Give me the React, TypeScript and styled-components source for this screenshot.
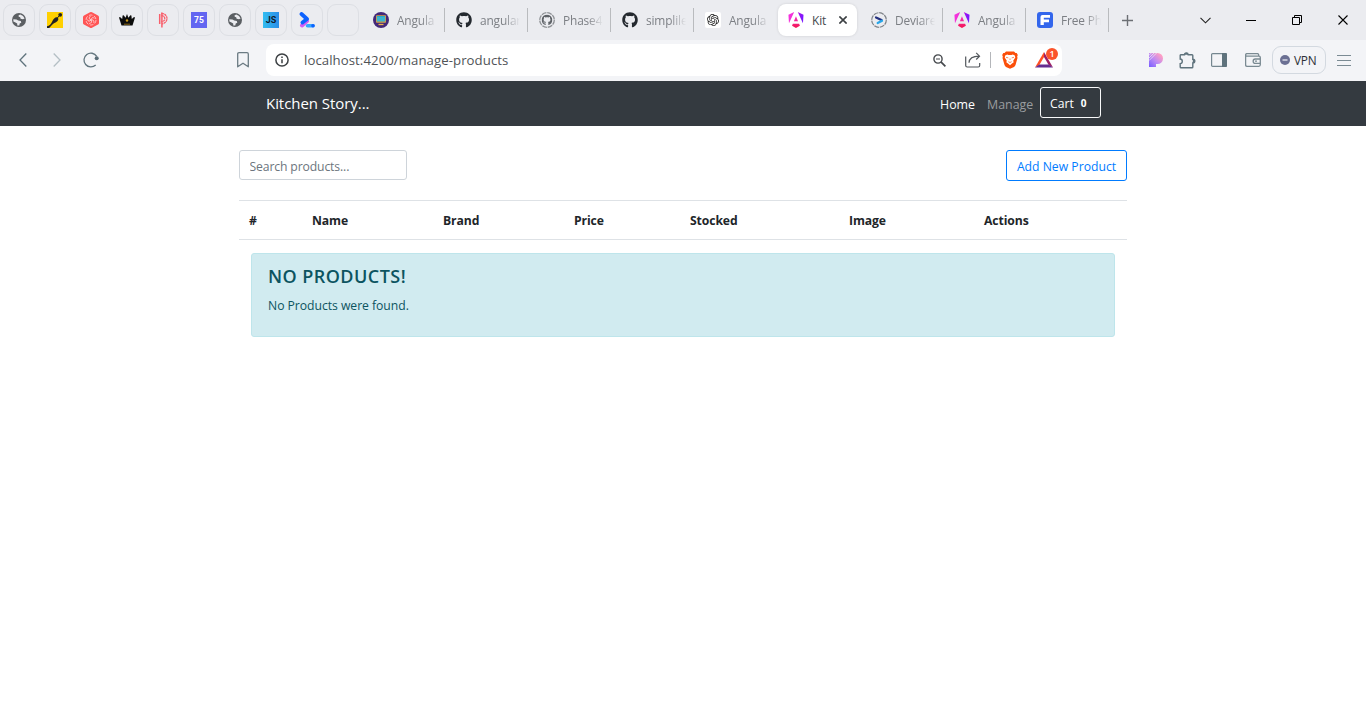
import React from "react";
import styled, { createGlobalStyle, css } from "styled-components";
import { FaGithub } from "react-icons/fa";
import { SiOpenai } from "react-icons/si";

const GlobalStyle = createGlobalStyle`
  *, *::before, *::after { box-sizing: border-box; }
  html, body { margin: 0; padding: 0; background: #fff; overflow: hidden; }
  body { font-family: "Open Sans", "Noto Sans", sans-serif; font-size: 12.2px; color: #212529; }
  svg { display: block; flex: none; }
`;

const Window = styled.div`
  width: 1366px;
  height: 728px;
  display: flex;
  flex-direction: column;
  background: #fff;
`;

/* ---------- browser tabs ---------- */

const TabStrip = styled.div`
  height: 40px;
  flex: none;
  display: flex;
  align-items: center;
  background: #ebecf0;
  padding-left: 3px;
`;

const PinnedTabs = styled.div`
  display: flex;
  gap: 4px;
  margin-right: 3px;
`;

const PinnedTab = styled.div`
  width: 32px;
  height: 32px;
  border: 1px solid #dddfe4;
  border-radius: 9px;
  display: flex;
  align-items: center;
  justify-content: center;
`;

const Tab = styled.div<{ $active?: boolean; $divider?: boolean }>`
  width: 83px;
  height: 24px;
  display: flex;
  align-items: center;
  padding-left: 11px;
  border-right: 1px solid ${(p) => (p.$divider ? "#b9bbbe" : "transparent")};
  color: ${(p) => (p.$active ? "#45484c" : "#7c7f84")};
  ${(p) =>
    p.$active &&
    css`
      width: 79px;
      height: 32px;
      margin: 0 3px 0 1px;
      padding-left: 10px;
      border: 0;
      border-radius: 8px;
      background: #fff;
      box-shadow: 0 0 3px rgba(0, 0, 0, 0.12);
    `}
`;

const TabTitle = styled.span<{ $solid?: boolean }>`
  width: ${(p) => (p.$solid ? 16 : 40)}px;
  margin-left: 8px;
  white-space: nowrap;
  font-size: 11.9px;
  line-height: 18px;
  letter-spacing: -0.15px;
  ${(p) => !p.$solid && "mask-image: linear-gradient(90deg, #000 60%, rgba(0, 0, 0, 0.15) 95%, transparent 100%);"}
`;

const TabClose = styled.span`
  margin-left: 11px;
`;

const NewTab = styled.div`
  width: 36px;
  display: flex;
  justify-content: center;
`;

const WindowControls = styled.div`
  display: flex;
  margin-left: auto;
`;

const WindowControl = styled.div`
  width: 46px;
  height: 40px;
  display: flex;
  align-items: center;
  justify-content: center;
`;

/* ---------- browser toolbar ---------- */

const Toolbar = styled.div`
  height: 41px;
  flex: none;
  display: flex;
  align-items: center;
  padding: 0 4px 1px 8px;
  background: #f3f4f7;
`;

const Slot = styled.div<{ $w: number; $gap?: number }>`
  position: relative;
  width: ${(p) => p.$w}px;
  height: 32px;
  flex: none;
  display: flex;
  align-items: center;
  justify-content: center;
  margin-right: ${(p) => p.$gap ?? 0}px;
`;

const AddressBar = styled.div`
  width: 796px;
  height: 32px;
  display: flex;
  align-items: center;
  background: #fff;
  border-radius: 8px;
  margin-right: 77px;
`;

const Url = styled.div`
  flex: 1;
  padding-left: 6px;
  font-size: 13.2px;
  line-height: 20px;
  color: #505357;
  letter-spacing: 0.07px;
`;

const AddressDivider = styled.div`
  width: 1px;
  height: 16px;
  background: #b4b6ba;
`;

const Badge = styled.span`
  position: absolute;
  left: 17px;
  top: 4px;
  width: 12px;
  height: 12px;
  border-radius: 6px;
  background: #fb542b;
  color: #fff;
  font-size: 9px;
  font-weight: 600;
  line-height: 12px;
  text-align: center;
`;

const VpnButton = styled.div`
  width: 54px;
  height: 28px;
  display: flex;
  align-items: center;
  gap: 4px;
  padding-left: 7px;
  border: 1px solid #d3d9e0;
  border-radius: 9px;
  font-size: 11.8px;
  letter-spacing: -0.2px;
  color: #2c2f36;
`;

/* ---------- application ---------- */

const Navbar = styled.nav`
  height: 45px;
  flex: none;
  display: flex;
  align-items: center;
  justify-content: space-between;
  padding: 0 265px 0 266px;
  background: #343a40;
`;

const Brand = styled.span`
  margin-bottom: 2px;
  color: #fff;
  font-size: 15px;
  line-height: 24px;
  letter-spacing: -0.05px;
`;

const NavLinks = styled.div`
  display: flex;
  align-items: center;
  height: 31px;
  margin-bottom: 2px;
`;

const NavLink = styled.span<{ $active?: boolean; $w: number }>`
  width: ${(p) => p.$w}px;
  padding-top: 3px;
  color: ${(p) => (p.$active ? "#fff" : "#999c9f")};
  font-size: 12.4px;
`;

const CartButton = styled.div`
  width: 61px;
  height: 31px;
  display: flex;
  align-items: center;
  padding: 1px 0 0 9px;
  border: 1px solid #f8f9fa;
  border-radius: 3px;
  color: #fff;
  font-size: 12.2px;
`;

const CartCount = styled.b`
  margin-left: 7px;
  font-size: 10px;
`;

const Container = styled.main`
  width: 888px;
  margin: 24px auto 0;
`;

const Actions = styled.div`
  display: flex;
  justify-content: space-between;
  margin-bottom: 19px;
`;

const SearchInput = styled.input`
  width: 168px;
  height: 30px;
  padding: 2px 9px 0 9.5px;
  border: 1px solid #ced4da;
  border-radius: 3px;
  font: inherit;
  letter-spacing: -0.13px;
  outline: 0;
  &::placeholder { color: #6c757d; opacity: 1; }
`;

const AddButton = styled.button`
  width: 121px;
  height: 31px;
  padding: 2px 0 0;
  border: 1px solid #007bff;
  border-radius: 3px;
  background: #fff;
  color: #007bff;
  font: inherit;
  white-space: nowrap;
`;

const Table = styled.table`
  width: 888px;
  table-layout: fixed;
  border-collapse: separate;
  border-spacing: 0;
`;

const HeadCell = styled.th<{ $w: number }>`
  width: ${(p) => p.$w}px;
  height: 40px;
  padding: 0 0 0 10px;
  border-top: 1px solid #dee2e6;
  border-bottom: 1px solid #dee2e6;
  text-align: left;
  font-weight: 700;
  font-size: 12.2px;
  letter-spacing: -0.1px;
`;

const Alert = styled.section`
  height: 84px;
  margin: 13px 12px 0;
  padding: 9px 16px;
  border: 1px solid #bee5eb;
  border-radius: 3px;
  background: #d1ebf0;
  color: #0c5460;
`;

const AlertTitle = styled.h4`
  margin: 0 0 7px;
  font-size: 18px;
  line-height: 26px;
  font-weight: 600;
  letter-spacing: 0.45px;
`;

const AlertText = styled.p`
  margin: 0;
  line-height: 19px;
  letter-spacing: -0.04px;
`;

/* ---------- icons ---------- */

const AngularIcon = ({ id }: { id: string }) => (
  <svg width="16" height="16" viewBox="0 0 223 236">
    <defs>
      <linearGradient id={`${id}a`} x1="0" y1="0" x2="1" y2="0.3">
        <stop offset="0" stopColor="#f637e3" />
        <stop offset="0.5" stopColor="#f02ad0" />
        <stop offset="0.7" stopColor="#a013f0" />
        <stop offset="1" stopColor="#7a17ff" />
      </linearGradient>
      <linearGradient id={`${id}b`} x1="0" y1="0" x2="0" y2="1">
        <stop offset="0" stopColor="#f030c8" />
        <stop offset="1" stopColor="#f5144f" />
      </linearGradient>
    </defs>
    <path fill={`url(#${id}a)`} d="m222.077 39.192-8.019 125.923L137.387 0l84.69 39.192ZM7.937 165.115 0 39.192 84.69 0 7.937 165.115Z" />
    <path fill={`url(#${id}b)`} d="m168.972 202.017-57.933 33.056-57.934-33.056 11.783-28.556h92.301l11.783 28.556ZM111.039 62.675l30.357 73.803H80.681l30.358-73.803Z" />
  </svg>
);

const Globe = () => (
  <svg width="14" height="14" viewBox="0 0 14 14">
    <circle cx="7" cy="7" r="7" fill="#5b5f63" />
    <path d="M8.300 1.400 6.600 2.300 6.700 3.700 8.200 4.200 8.600 5.800 11 6.300 12.600 5.600A6 6 0 0 0 8.300 1.400ZM1.300 6.200 4.500 6.400 6.200 7.600 8.800 8 9.300 9.700 7.700 10.600 7.300 12.600 5.300 12.600 5.200 10.400 3.500 9.600 1.400 8.500Z" fill="#ebecf0" />
  </svg>
);

const DarkSpoon = () => (
  <svg width="16" height="16" viewBox="0 0 16 16">
    <rect width="16" height="16" fill="#ffd000" />
    <path d="M0 16V14.200C2.500 14 4 12 5.200 9.500 6.500 6.500 9 4.500 10.500 5.600S11.500 9 9 10.300C6 11.500 4 14 2.200 16Z" fill="#222" />
    <path d="m9 7.500 3.500-4" stroke="#222" strokeWidth="1" />
    <circle cx="13.200" cy="2.800" r="1.900" fill="#222" />
  </svg>
);

const HexSwirl = () => (
  <svg width="16" height="16" viewBox="0 0 16 16">
    <path d="M7 .3q1-.5 2 0l6 3.100q1 .6 1 1.600v6q0 1-1 1.600l-6 3.100q-1 .5-2 0l-6-3.100q-1-.6-1-1.600V5q0-1 1-1.600Z" fill="#ff5555" />
    <g fill="none" stroke="#ffd9d9" strokeWidth="0.8">
      <circle cx="8" cy="8" r="5" strokeDasharray="3.700 1.500" />
      {[0, 72, 144, 216, 288].map((a) => (
        <path key={a} d="M8 8C8 6 9.500 5 11.500 6.200" transform={`rotate(${a} 8 8)`} />
      ))}
    </g>
  </svg>
);

const Crown = () => (
  <svg width="16" height="12" viewBox="0 0 16 12">
    <path d="M2.500 11.500 0 3.500l1-.5 2.200 2 .4-3.500 1-.3 2 2.500L8 0l1.400 3.700 2-2.500 1 .3.400 3.500L15 3l1 .5-2.500 8Z" fill="#0c0c0c" />
    <path d="M5 10.200h6" stroke="#a97d16" strokeWidth="0.800" />
    <circle cx="8" cy="6.500" r="1.200" fill="#c8981d" />
  </svg>
);

const PinkP = () => (
  <svg width="10" height="16" viewBox="0 0 10 16" fill="none" stroke="#f8606c">
    <path d="M1.700 2v10M3.900.500v15" strokeWidth="1.500" />
    <path d="M3.300 1.300C7 1.500 9 4 9 6.500s-2 5-5 5.300M3.300 3.500C6 4 6.800 5 6.800 6.700S5.500 9.500 3.300 9.700" strokeWidth="1.300" strokeDasharray="2.500 .5" />
  </svg>
);

const LetterTile = styled.span<{ $bg: string; $fg: string; $size: number }>`
  width: 16px;
  height: 16px;
  background: ${(p) => p.$bg};
  color: ${(p) => p.$fg};
  font: 700 ${(p) => p.$size}px/16px Roboto, sans-serif;
  text-align: center;
`;

const PromptLogo = () => (
  <svg width="16" height="16" viewBox="0 0 16 16" fill="none" strokeLinecap="round">
    <path d="M3 13.500 8 9" stroke="#d65cf5" strokeWidth="4" />
    <path d="M2.500 2 8 7 3.500 10.500" stroke="#0d62fe" strokeWidth="3.800" strokeLinejoin="round" />
    <path d="M8.500 13.700h5.500" stroke="#38a5ff" strokeWidth="3.600" />
    <circle cx="14" cy="13.700" r="1.800" fill="#0d62fe" />
  </svg>
);

const MonitorLogo = () => (
  <svg width="16" height="16" viewBox="0 0 16 16">
    <circle cx="8" cy="8" r="8" fill="#43297a" />
    <rect x="3" y="3.200" width="10" height="7.600" rx="0.800" fill="#d9a04a" />
    <rect x="3.800" y="4" width="8.400" height="5.500" fill="#28a8c8" />
    <path d="M4 6h8M4 8h8" stroke="#55c8df" strokeWidth="0.800" />
    <path d="M5.500 12.500h5" stroke="#f0b44c" strokeWidth="1.300" />
  </svg>
);

const RingGithub = () => (
  <svg width="16" height="16" viewBox="0 0 16 16">
    <circle cx="8" cy="8" r="7.300" fill="none" stroke="#8e9195" strokeWidth="1.300" strokeDasharray="4.900 .83" />
    <g transform="translate(2.500 2.500)">
      <FaGithub size={11} color="#5f6368" />
    </g>
  </svg>
);

const OpenAiTile = () => (
  <svg width="16" height="16" viewBox="0 0 16 16">
    <rect width="16" height="16" rx="2" fill="#fff" />
    <g transform="translate(2 2)">
      <SiOpenai size={12} color="#222" />
    </g>
  </svg>
);

const DeviareLogo = () => (
  <svg width="16" height="16" viewBox="0 0 16 16" fill="none">
    <circle cx="8" cy="8" r="7.300" stroke="#7e8287" strokeWidth="1.200" strokeDasharray="4.900 .83" />
    <path d="m5 5.500 5.500 2.600" stroke="#24307f" strokeWidth="2.200" strokeLinecap="round" />
    <path d="m11 8.800-4.300 2.200" stroke="#28a6e8" strokeWidth="2.300" strokeLinecap="round" />
  </svg>
);

const FreeLogo = () => (
  <svg width="16" height="16" viewBox="0 0 16 16">
    <rect width="16" height="16" rx="3" fill="#3366ec" />
    <path d="M3.500 13V5q0-2 2-2H13v2.700H6.800V7.500H12v2.700H6.800V13Z" fill="#fff" />
  </svg>
);

const CrossIcon = ({ size, color, weight }: { size: number; color: string; weight: number }) => (
  <svg width={size} height={size} viewBox="0 0 10 10">
    <path d="m.5.5 9 9m0-9-9 9" stroke={color} strokeWidth={weight} fill="none" />
  </svg>
);

const Chevron = ({ flip, color }: { flip?: boolean; color: string }) => (
  <svg width="8" height="14" viewBox="0 0 8 14">
    <path d={flip ? "M.700.500 7 7 .700 13.500" : "M7.300.500 1 7l6.300 6.500"} stroke={color} strokeWidth="1.300" fill="none" />
  </svg>
);

const Reload = () => (
  <svg width="16" height="16" viewBox="0 0 16 16">
    <path d="M12.700 13A6.900 6.900 0 1 1 13.700 4.300" stroke="#62757e" strokeWidth="1.300" fill="none" />
    <circle cx="13.700" cy="6.300" r="2" fill="#5b6e78" />
  </svg>
);

const Bookmark = () => (
  <svg width="12" height="16" viewBox="0 0 12 16">
    <path d="M.700 14.800V2Q.700.700 2 .700h8q1.300 0 1.300 1.300v12.800L6 11.200Z" stroke="#6b7b83" strokeWidth="1.300" fill="none" strokeLinejoin="round" />
  </svg>
);

const Info = () => (
  <svg width="14" height="14" viewBox="0 0 14 14">
    <circle cx="7" cy="7" r="6.100" stroke="#3c4043" strokeWidth="1.500" fill="none" />
    <path d="M7 6.200v4M7 3.600v1.500" stroke="#3c4043" strokeWidth="1.500" />
  </svg>
);

const ZoomOut = () => (
  <svg width="13" height="13" viewBox="0 0 13 13" fill="none" stroke="#45494d">
    <circle cx="5" cy="5" r="4.100" strokeWidth="1.400" />
    <path d="M3 5h4" strokeWidth="1" />
    <path d="m7.900 7.900 4.500 4.500" strokeWidth="1.700" />
  </svg>
);

const Share = () => (
  <svg width="16" height="16" viewBox="0 0 16 16" fill="none" stroke="#52575c" strokeWidth="1.200">
    <path d="M.700 4.500v9q0 1.500 1.500 1.500h11q1.500 0 1.500-1.500V11" />
    <path d="M4 10.800C4.200 6.500 7 4.200 14.300 4.200M11.200.900l3.300 3.300-3.300 3.300" />
  </svg>
);

const BraveLion = () => (
  <svg width="16" height="18" viewBox="0 0 16 18">
    <path d="M4 .5h8l1.500 1.500 1.200-.1 1.100 2-.6 1.500.3 1.500-2 7.200q-.4 1.100-1.500 1.900L8 17.800 4 16q-1.100-.8-1.500-1.900L.500 6.900l.3-1.500-.6-1.500 1.100-2 1.200.1Z" fill="#fb4f0a" />
    <path d="m3.200 4.500 2-1.100 1.300.500H9.500l1.300-.500 2 1.100.5 1.900-2.100 3.300.5 1.600-1.700 1.300L8 14.300 6 12.600l-1.700-1.300.5-1.600-2.100-3.300Z" fill="#fff" />
    <path d="m4 6.300 2.300.600M12 6.300l-2.300.600M6.400 10.700 8 11.500l1.600-.8M8 7.500v1.500" stroke="#fb6a30" strokeWidth="0.800" fill="none" />
  </svg>
);

const BatTriangle = () => (
  <svg width="18" height="16" viewBox="0 0 18 16">
    <path d="M9 0 0 15.500l4.300-2.400L9 5Z" fill="#ff4f22" />
    <path d="m9 0 9 15.500-4.300-2.400L9 5Z" fill="#9e1f63" />
    <path d="M0 15.500h18l-4.300-3H4.300Z" fill="#662d91" />
  </svg>
);

const StripedP = () => (
  <svg width="14" height="14" viewBox="0 0 14 14">
    <defs>
      <linearGradient id="stripedP" x1="1" y1="0" x2="0" y2="1">
        <stop offset="0.150" stopColor="#ff9fc3" />
        <stop offset="0.550" stopColor="#bd8bf4" />
        <stop offset="1" stopColor="#765cff" />
      </linearGradient>
    </defs>
    <path d="M0 0h8.500a5.200 5.200 0 0 1 0 11H7v3H0Z" fill="url(#stripedP)" />
    <path d="M0 2.300 2.300 0M0 5 5 0M0 7.600 7.600 0" stroke="#f3f4f7" strokeWidth="0.700" />
  </svg>
);

const Puzzle = () => (
  <svg width="17" height="17" viewBox="0 0 17 17">
    <path d="M1.700 2.700H5.500Q5.500 1 7.300 1T9.200 2.700H13Q13.800 2.700 13.800 3.500V7.200Q15.800 7.200 15.800 9T13.800 10.900V15Q13.800 15.800 13 15.800H2Q1.200 15.800 1.200 15V11.700Q3.300 11.500 3.300 9.300T1.200 7V3.300Q1.200 2.700 1.700 2.700Z" stroke="#5f737d" strokeWidth="1.400" fill="none" />
    <path d="M5.500 2.700a1.900 1.900 0 0 1 3.800 0ZM13.800 7.100a1.900 1.900 0 0 1 0 3.800Z" fill="#5f737d" />
  </svg>
);

const SidePanel = () => (
  <svg width="16" height="14" viewBox="0 0 16 14">
    <rect x="0.600" y="0.600" width="14.500" height="12.800" rx="1" stroke="#758790" strokeWidth="1.200" fill="none" />
    <path d="M11 0h4q1 0 1 1v12q0 1-1 1h-4Z" fill="#5f737d" />
  </svg>
);

const Wallet = () => (
  <svg width="16" height="14" viewBox="0 0 16 14" fill="none" stroke="#7a8a92" strokeWidth="1.300">
    <path d="M13.700 3V2q0-1.400-1.400-1.400H2Q.600.600.600 2v9.800q0 1.500 1.500 1.500h11.700q1.500 0 1.500-1.500V4.500q0-1.300-1.300-1.300H2.200Q.600 3.200.600 2" />
    <path d="M15.300 6H10.300a2.100 2.100 0 0 0 0 4.300h5M10 8.200h2" />
  </svg>
);

const VpnDot = () => (
  <svg width="10" height="10" viewBox="0 0 10 10">
    <circle cx="5" cy="5" r="5" fill="#6b7093" />
    <path d="M2.500 5h5" stroke="#e8eaf2" strokeWidth="1.300" />
  </svg>
);

const Menu = () => (
  <svg width="14" height="12" viewBox="0 0 14 12">
    <path d="M0 1.500h14M0 6.500h14M0 11.500h14" stroke="#7b8b94" strokeWidth="1.100" />
  </svg>
);

const pinned = [
  <Globe />,
  <DarkSpoon />,
  <HexSwirl />,
  <Crown />,
  <PinkP />,
  <LetterTile $bg="#6366f1" $fg="#fff" $size={8.5}>75</LetterTile>,
  <Globe />,
  <LetterTile $bg="linear-gradient(90deg, #32bdf0, #298de8)" $fg="#111b2b" $size={9}>JS</LetterTile>,
  <PromptLogo />,
  null,
];

const tabs = [
  { icon: <MonitorLogo />, title: "Angula", divider: true },
  { icon: <FaGithub size={16} color="#24292f" />, title: "angular", divider: true },
  { icon: <RingGithub />, title: "Phase4", divider: true },
  { icon: <FaGithub size={16} color="#24292f" />, title: "simplile", divider: true },
  { icon: <OpenAiTile />, title: "Angula", divider: false },
  { icon: <AngularIcon id="kit" />, title: "Kit", active: true },
  { icon: <DeviareLogo />, title: "Deviare", divider: true },
  { icon: <AngularIcon id="docs" />, title: "Angula", divider: true },
  { icon: <FreeLogo />, title: "Free Ph", divider: true },
];

const columns = [
  { label: "#", w: 63 },
  { label: "Name", w: 131 },
  { label: "Brand", w: 131 },
  { label: "Price", w: 116 },
  { label: "Stocked", w: 159 },
  { label: "Image", w: 135 },
  { label: "Actions", w: 153 },
];

export default function App() {
  return (
    <Window>
      <GlobalStyle />
      <TabStrip>
        <PinnedTabs>
          {pinned.map((icon, i) => (
            <PinnedTab key={i}>{icon}</PinnedTab>
          ))}
        </PinnedTabs>
        {tabs.map((t, i) => (
          <Tab key={i} $active={t.active} $divider={t.divider}>
            {t.icon}
            <TabTitle $solid={t.active}>{t.title}</TabTitle>
            {t.active && (
              <TabClose>
                <CrossIcon size={8} color="#3c4043" weight={2} />
              </TabClose>
            )}
          </Tab>
        ))}
        <NewTab>
          <svg width="11" height="11" viewBox="0 0 11 11">
            <path d="M5.500 0v11M0 5.500h11" stroke="#6c6f74" strokeWidth="1.400" />
          </svg>
        </NewTab>
        <WindowControls>
          <WindowControl>
            <svg width="11" height="7" viewBox="0 0 11 7">
              <path d="m.500.800 5 5 5-5" stroke="#222" fill="none" strokeWidth="1.100" />
            </svg>
          </WindowControl>
          <WindowControl>
            <svg width="10" height="1" viewBox="0 0 10 1">
              <rect width="10" height="1" fill="#000" />
            </svg>
          </WindowControl>
          <WindowControl>
            <svg width="10" height="10" viewBox="0 0 10 10">
              <path d="M.500 2.500h7v7h-7ZM2.500 2.500v-2h7v7h-2" stroke="#000" fill="none" />
            </svg>
          </WindowControl>
          <WindowControl>
            <CrossIcon size={10} color="#000" weight={1.1} />
          </WindowControl>
        </WindowControls>
      </TabStrip>

      <Toolbar>
        <Slot $w={30}><Chevron color="#5f737d" /></Slot>
        <Slot $w={37}><Chevron flip color="#b4bfc5" /></Slot>
        <Slot $w={32} $gap={121}><Reload /></Slot>
        <Slot $w={30} $gap={8}><Bookmark /></Slot>
        <AddressBar>
          <Slot $w={32}><Info /></Slot>
          <Url>localhost:4200/manage-products</Url>
          <Slot $w={33}><ZoomOut /></Slot>
          <Slot $w={34}><Share /></Slot>
          <AddressDivider />
          <Slot $w={38}><BraveLion /></Slot>
          <Slot $w={30} $gap={3}>
            <BatTriangle />
            <Badge>1</Badge>
          </Slot>
        </AddressBar>
        <Slot $w={33}><StripedP /></Slot>
        <Slot $w={31}><Puzzle /></Slot>
        <Slot $w={32}><SidePanel /></Slot>
        <Slot $w={36} $gap={1}><Wallet /></Slot>
        <VpnButton>
          <VpnDot />
          VPN
        </VpnButton>
        <Slot $w={36}><Menu /></Slot>
      </Toolbar>

      <Navbar>
        <Brand>Kitchen Story...</Brand>
        <NavLinks>
          <NavLink $active $w={47}>Home</NavLink>
          <NavLink $w={53}>Manage</NavLink>
          <CartButton>
            Cart
            <CartCount>0</CartCount>
          </CartButton>
        </NavLinks>
      </Navbar>

      <Container>
        <Actions>
          <SearchInput placeholder="Search products..." />
          <AddButton>Add New Product</AddButton>
        </Actions>
        <Table>
          <thead>
            <tr>
              {columns.map((c) => (
                <HeadCell key={c.label} $w={c.w}>{c.label}</HeadCell>
              ))}
            </tr>
          </thead>
        </Table>
        <Alert>
          <AlertTitle>NO PRODUCTS!</AlertTitle>
          <AlertText>No Products were found.</AlertText>
        </Alert>
      </Container>
    </Window>
  );
}
